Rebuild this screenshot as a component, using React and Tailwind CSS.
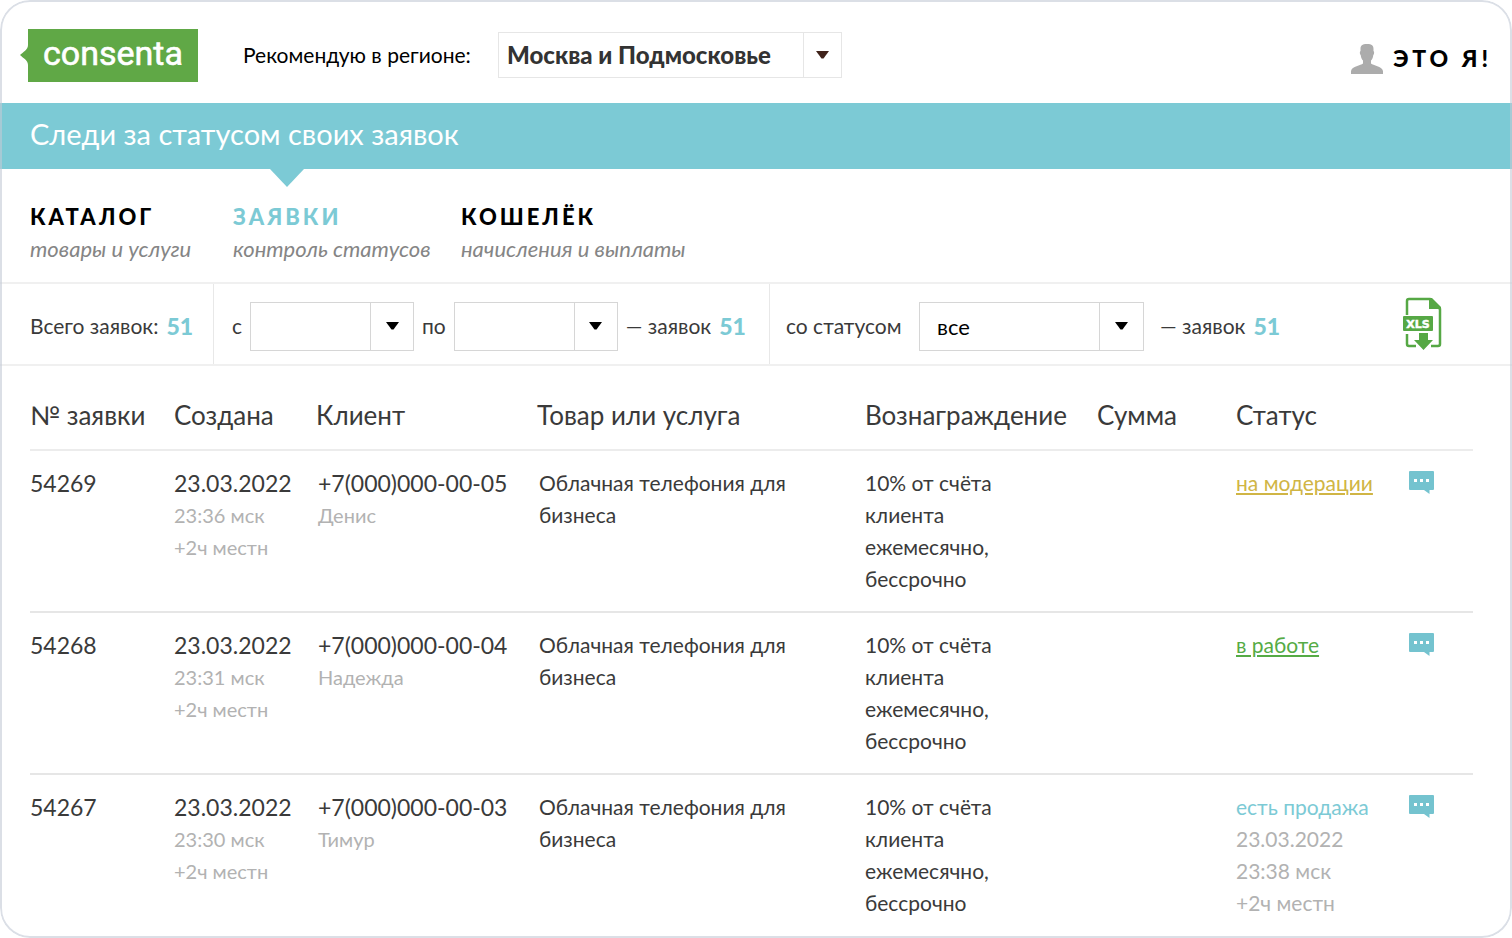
import { useState } from 'react'

const requests = [
  {
    id: '54269',
    date: '23.03.2022',
    time: '23:36 мск',
    local: '+2ч местн',
    phone: '+7(000)000-00-05',
    client: 'Денис',
    product: 'Облачная телефония для бизнеса',
    reward: '10% от счёта клиента ежемесячно, бессрочно',
    sum: '',
    status: 'moderation'
  },
  {
    id: '54268',
    date: '23.03.2022',
    time: '23:31 мск',
    local: '+2ч местн',
    phone: '+7(000)000-00-04',
    client: 'Надежда',
    product: 'Облачная телефония для бизнеса',
    reward: '10% от счёта клиента ежемесячно, бессрочно',
    sum: '',
    status: 'work'
  },
  {
    id: '54267',
    date: '23.03.2022',
    time: '23:30 мск',
    local: '+2ч местн',
    phone: '+7(000)000-00-03',
    client: 'Тимур',
    product: 'Облачная телефония для бизнеса',
    reward: '10% от счёта клиента ежемесячно, бессрочно',
    sum: '',
    status: 'sale',
    statusDetails: ['23.03.2022', '23:38 мск', '+2ч местн']
  }
]

const statuses = {
  moderation: { label: 'на модерации', className: 'text-[#d0b545] underline' },
  work: { label: 'в работе', className: 'text-[#55ab45] underline' },
  sale: { label: 'есть продажа', className: 'text-[#7ccad5]' }
}

const tabs = [
  { id: 'catalog', title: 'КАТАЛОГ', hint: 'товары и услуги', width: 'w-[203px]' },
  { id: 'requests', title: 'ЗАЯВКИ', hint: 'контроль статусов', width: 'w-[228px]' },
  { id: 'wallet', title: 'КОШЕЛЁК', hint: 'начисления и выплаты', width: 'w-[260px]' }
]

function Logo() {
  return (
    <svg width="178" height="53" viewBox="0 0 178 53" role="img" aria-label="consenta">
      <path d="M8 0H178V53H8V36C8 31 3 29 0 26C3 23 8 21 8 16Z" fill="#60a846" />
      <text x="93" y="36" textAnchor="middle" fontFamily="Roboto, sans-serif" fontSize="34" fontWeight="400" fill="#fff" stroke="#fff" strokeWidth="0.6" strokeLinejoin="round">
        consenta
      </text>
    </svg>
  )
}

function UserIcon() {
  return (
    <svg width="32" height="30" viewBox="0 0 32 30" fill="#acacac" aria-hidden="true">
      <path d="M16 0C21 0 22.500 1.500 22.500 5V7C23.500 7.500 23.300 10.500 22.300 11C22 14 21 15.500 20 16.500V19.500C22 21.500 31 22 32 27V30H0V27C1 22 10 21.500 12 19.500V16.500C11 15.500 10 14 9.700 11C8.700 10.500 8.500 7.500 9.500 7V5C9.500 1.500 11 0 16 0Z" />
    </svg>
  )
}

function XlsIcon() {
  return (
    <svg width="40" height="54" viewBox="0 0 40 54" aria-hidden="true">
      <path d="M5 18V4Q5 2 7 2H28L38 12V47Q38 49 36 49H29M5 37V47Q5 49 7 49H14" fill="none" stroke="#56a845" strokeWidth="2.500" />
      <path d="M27 1H30L39 10V12H27Z" fill="#56a845" />
      <rect x="1" y="19" width="30" height="15" rx="1" fill="#56a845" />
      <text x="16" y="31" textAnchor="middle" fontFamily="DejaVu Sans, sans-serif" fontSize="11" fontWeight="700" fill="#fff" stroke="#fff" strokeWidth="0.5">
        XLS
      </text>
      <path d="M17 36H26V43H31L21.500 53L12 43H17Z" fill="#56a845" />
    </svg>
  )
}

function CommentIcon() {
  return (
    <svg width="26" height="24" viewBox="0 0 26 24" aria-hidden="true">
      <path d="M2 0H25Q26 0 26 1V18Q26 19 25 19H21.500V23L16 19H2Q1 19 1 18V1Q1 0 2 0Z" fill="#74c3cf" />
      <path d="M6 8H9V11H6ZM12 8H15V11H12ZM18 8H21V11H18Z" fill="#fff" />
    </svg>
  )
}

function Caret({ className }) {
  return (
    <svg width="13" height="8" viewBox="0 0 13 8" fill="currentColor" className={className} aria-hidden="true">
      <path d="M0 0H13L7.500 7.500H5.500Z" />
    </svg>
  )
}

function DateField({ label, value, onChange }) {
  return (
    <div className="flex items-center gap-2">
      <label htmlFor={`date-${label}`}>{label}</label>
      <div className="flex h-[49px] w-[164px] border border-[#d6d6d6]">
        <input
          id={`date-${label}`}
          type="text"
          value={value}
          onChange={(e) => onChange(e.target.value)}
          className="min-w-0 flex-1 px-2 outline-none"
        />
        <button
          type="button"
          aria-label="Открыть календарь"
          className="flex w-[43px] items-center justify-center border-l border-[#d6d6d6] text-black"
        >
          <Caret />
        </button>
      </div>
    </div>
  )
}

function Count({ value }) {
  return <b className="text-[23px] font-black text-[#7ccad5]">{value}</b>
}

function App() {
  const [region, setRegion] = useState('Москва и Подмосковье')
  const [activeTab, setActiveTab] = useState('requests')
  const [dateFrom, setDateFrom] = useState('')
  const [dateTo, setDateTo] = useState('')
  const [status, setStatus] = useState('все')

  return (
    <div className="relative min-h-screen overflow-hidden rounded-[30px] bg-white font-[Lato,sans-serif] text-[21px] text-[#3a3a3a]">
      {/* Header */}
      <header className="flex h-[103px] items-center px-5 pt-1.5">
        <a href="#" className="shrink-0 pt-0.5">
          <Logo />
        </a>
        <label htmlFor="region" className="ml-[45px] w-[255px] shrink-0 text-black">
          Рекомендую в регионе:
        </label>
        <div className="relative h-[46px] w-[344px] shrink-0 border border-[#e6e6e6]">
          <select
            id="region"
            value={region}
            onChange={(e) => setRegion(e.target.value)}
            className="h-full w-full appearance-none pl-2 text-[24px] font-black text-[#333] outline-none"
          >
            <option>Москва и Подмосковье</option>
          </select>
          <span className="pointer-events-none absolute inset-y-0 right-0 flex w-[38px] items-center justify-center border-l border-[#e6e6e6]">
            <Caret className="text-[#40231b]" />
          </span>
        </div>
        <button type="button" className="ml-auto flex items-center gap-2.5 pt-2 text-[23px] font-black tracking-[4px] text-black">
          <UserIcon />
          ЭТО Я!
        </button>
      </header>

      {/* Banner */}
      <div className="flex h-[66px] items-center bg-[#7ccad5] px-[30px] pb-1">
        <h1 className="text-[29px] text-white">Следи за статусом своих заявок</h1>
      </div>

      {/* Tabs */}
      <nav className="flex h-[113px] px-[30px]">
        {tabs.map((tab) => (
          <button
            key={tab.id}
            type="button"
            onClick={() => setActiveTab(tab.id)}
            className={`relative flex flex-col items-start pt-8 text-left whitespace-nowrap ${tab.width}`}
          >
            {tab.id === activeTab && (
              <svg width="34" height="18" viewBox="0 0 34 18" className="absolute top-0 left-[37px]" aria-hidden="true">
                <path d="M0 0H34L17 18Z" fill="#7ccad5" />
              </svg>
            )}
            <span
              className={`text-[22px] leading-8 font-black tracking-[3px] ${
                tab.id === activeTab ? 'text-[#7ccad5]' : 'text-black'
              }`}
            >
              {tab.title}
            </span>
            <span className="text-[22px] leading-8 text-[#858585] italic">{tab.hint}</span>
          </button>
        ))}
      </nav>

      {/* Filters */}
      <section className="flex h-[84px] items-stretch border-y-2 border-[#f0f0f0] whitespace-nowrap">
        <div className="flex w-[214px] shrink-0 items-center gap-2 border-r border-[#e8e8e8] pt-1 pl-[30px]">
          Всего заявок: <Count value={51} />
        </div>
        <div className="flex w-[556px] shrink-0 items-center gap-2 border-r border-[#e8e8e8] pt-1 pl-[18px]">
          <DateField label="с" value={dateFrom} onChange={setDateFrom} />
          <DateField label="по" value={dateTo} onChange={setDateTo} />
          <span className="flex items-center gap-2">— заявок <Count value={51} /></span>
        </div>
        <div className="flex flex-1 items-center pt-1 pr-[70px] pl-4">
          <label htmlFor="status" className="w-[133px]">со статусом</label>
          <div className="relative h-[49px] w-[225px] border border-[#d6d6d6]">
            <select
              id="status"
              value={status}
              onChange={(e) => setStatus(e.target.value)}
              className="h-full w-full appearance-none pl-[17px] text-[22px] text-black outline-none"
            >
              <option>все</option>
            </select>
            <span className="pointer-events-none absolute inset-y-0 right-0 flex w-[44px] items-center justify-center border-l border-[#d6d6d6] text-black">
              <Caret />
            </span>
          </div>
          <span className="ml-4 flex items-center gap-2">— заявок <Count value={51} /></span>
          <button type="button" aria-label="Скачать XLS" className="ml-auto pb-1">
            <XlsIcon />
          </button>
        </div>
      </section>

      {/* Requests table */}
      <div className="pr-[39px] pl-[30px]">
        <table className="w-full table-fixed text-left leading-8">
          <colgroup>
            <col className="w-[144px]" />
            <col className="w-[142px]" />
            <col className="w-[221px]" />
            <col />
            <col className="w-[232px]" />
            <col className="w-[139px]" />
            <col className="w-[172px]" />
            <col className="w-[65px]" />
          </colgroup>
          <thead>
            <tr className="h-[84px] border-b-2 border-[#ececec] text-[26px] whitespace-nowrap">
              <th className="pt-3.5 font-normal">№ заявки</th>
              <th className="pt-3.5 font-normal">Создана</th>
              <th className="pt-3.5 font-normal">Клиент</th>
              <th className="pt-3.5 font-normal">Товар или услуга</th>
              <th className="pt-3.5 font-normal">Вознаграждение</th>
              <th className="pt-3.5 font-normal">Сумма</th>
              <th className="pt-3.5 font-normal">Статус</th>
              <th aria-label="Комментарии"></th>
            </tr>
          </thead>
          <tbody>
            {requests.map((item) => (
              <tr key={item.id} className="border-b-2 border-[#e6e6e6] align-top last:border-b-0">
                <td className="py-4 text-[23px]">{item.id}</td>
                <td className="py-4">
                  <p className="text-[23px]">{item.date}</p>
                  <p className="text-[20px] text-[#b2b2b2]">{item.time}</p>
                  <p className="text-[20px] text-[#b2b2b2]">{item.local}</p>
                </td>
                <td className="py-4 pl-0.5">
                  <p className="text-[23px]">{item.phone}</p>
                  <p className="text-[20px] text-[#b2b2b2]">{item.client}</p>
                </td>
                <td className="py-4 pr-[60px] pl-0.5">{item.product}</td>
                <td className="py-4 pr-[80px]">{item.reward}</td>
                <td className="py-4">{item.sum}</td>
                <td className="py-4">
                  <a href="#" className={`decoration-2 underline-offset-2 ${statuses[item.status].className}`}>
                    {statuses[item.status].label}
                  </a>
                  {item.statusDetails?.map((line) => (
                    <p key={line} className="text-[#b2b2b2]">{line}</p>
                  ))}
                </td>
                <td className="py-5">
                  <button type="button" aria-label="Комментарии к заявке" className="block">
                    <CommentIcon />
                  </button>
                </td>
              </tr>
            ))}
          </tbody>
        </table>
      </div>

      {/* Frame drawn over the banner edges */}
      <div className="pointer-events-none absolute inset-0 rounded-[30px] border-2 border-[#c3c9d6]/60" />
    </div>
  )
}

export default App
